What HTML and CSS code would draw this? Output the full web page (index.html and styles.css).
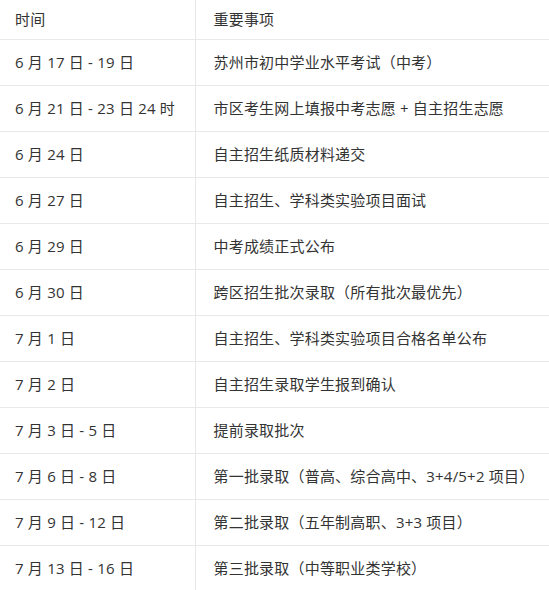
FILE: index.html
```html
<!DOCTYPE html>
<html lang="zh">
<head>
<meta charset="utf-8">
<link rel="stylesheet" href="styles.css">
</head>
<body>
<table class="schedule">
  <thead>
    <tr><th class="col-time">时间</th><th>重要事项</th></tr>
  </thead>
  <tbody>
    <tr><td>6 月 17 日 - 19 日</td><td>苏州市初中学业水平考试（中考）</td></tr>
    <tr><td>6 月 21 日 - 23 日 24 时</td><td>市区考生网上填报中考志愿 + 自主招生志愿</td></tr>
    <tr><td>6 月 24 日</td><td>自主招生纸质材料递交</td></tr>
    <tr><td>6 月 27 日</td><td>自主招生、学科类实验项目面试</td></tr>
    <tr><td>6 月 29 日</td><td>中考成绩正式公布</td></tr>
    <tr><td>6 月 30 日</td><td>跨区招生批次录取（所有批次最优先）</td></tr>
    <tr><td>7 月 1 日</td><td>自主招生、学科类实验项目合格名单公布</td></tr>
    <tr><td>7 月 2 日</td><td>自主招生录取学生报到确认</td></tr>
    <tr><td>7 月 3 日 - 5 日</td><td>提前录取批次</td></tr>
    <tr><td>7 月 6 日 - 8 日</td><td>第一批录取（普高、综合高中、3+4/5+2 项目）</td></tr>
    <tr><td>7 月 9 日 - 12 日</td><td>第二批录取（五年制高职、3+3 项目）</td></tr>
    <tr><td>7 月 13 日 - 16 日</td><td>第三批录取（中等职业类学校）</td></tr>
  </tbody>
</table>
</body>
</html>
```

FILE: styles.css
```css
html, body {
  margin: 0;
  padding: 0;
  background: #ffffff;
}
body {
  font-family: "Open Sans", "Noto Sans CJK SC", sans-serif;
  font-size: 15px;
  color: #333333;
}
.schedule {
  width: 549px;
  border-collapse: collapse;
  table-layout: fixed;
  letter-spacing: 0.2px;
}
.schedule th,
.schedule td {
  box-sizing: border-box;
  text-align: left;
  font-weight: normal;
  padding: 0 0 0 15px;
  border-bottom: 1px solid #e8e8e8;
  white-space: nowrap;
  line-height: 20px;
}
.schedule .col-time {
  width: 195px;
}
.schedule th {
  height: 39px;
}
.schedule td {
  height: 46px;
}
.schedule th + th,
.schedule td + td {
  border-left: 1px solid #e8e8e8;
  padding-left: 18px;
}
```
